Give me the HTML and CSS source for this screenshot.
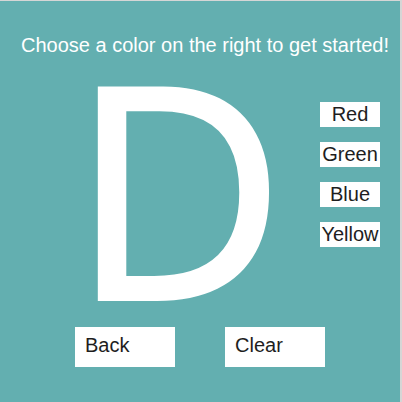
FILE: index.html
```html
<!DOCTYPE html>
<html>
<head>
<meta charset="utf-8">
<link rel="stylesheet" href="styles.css">
</head>
<body>
<div class="app">
  <h1 class="title">Choose a color on the right to get started!</h1>
  <div class="main">
    <div class="letter">D</div>
    <div class="colors">
      <button class="color-btn">Red</button>
      <button class="color-btn">Green</button>
      <button class="color-btn">Blue</button>
      <button class="color-btn">Yellow</button>
    </div>
  </div>
  <div class="actions">
    <button class="action-btn">Back</button>
    <button class="action-btn">Clear</button>
  </div>
</div>
</body>
</html>
```
FILE: styles.css
```css
html, body {
  margin: 0;
  padding: 0;
}
body {
  background: #d6d6d6;
  width: 402px;
  height: 402px;
  overflow: hidden;
}
.app {
  margin-top: 1px;
  width: 400px;
  height: 401px;
  background: #63afb0;
  font-family: "Liberation Sans", Arial, sans-serif;
}
.title {
  margin: 0;
  padding: 33px 0 0 21px;
  font-size: 20px;
  font-weight: normal;
  line-height: 23px;
  color: #ffffff;
  white-space: nowrap;
}
.main {
  display: flex;
  margin-top: 28px;
  padding-left: 71px;
}
.letter {
  width: 249px;
  height: 200px;
  font-family: "Open Sans", sans-serif;
  font-size: 295px;
  line-height: 200px;
  color: #ffffff;
  -webkit-text-stroke: 4px #ffffff;
}
.colors {
  display: flex;
  flex-direction: column;
  gap: 15px;
  margin-top: 17px;
}
.color-btn {
  width: 60px;
  height: 25px;
  padding: 0;
  border: none;
  background: #ffffff;
  color: #1e1e1e;
  font-family: "Liberation Sans", Arial, sans-serif;
  font-size: 20px;
  line-height: 25px;
  text-align: center;
  white-space: nowrap;
}
.actions {
  display: flex;
  gap: 50px;
  margin-top: 42px;
  padding-left: 75px;
}
.action-btn {
  box-sizing: border-box;
  width: 100px;
  height: 40px;
  padding: 0 0 4px 10px;
  border: none;
  background: #ffffff;
  color: #1e1e1e;
  font-family: "Liberation Sans", Arial, sans-serif;
  font-size: 20px;
  line-height: 36px;
  text-align: left;
}
```
